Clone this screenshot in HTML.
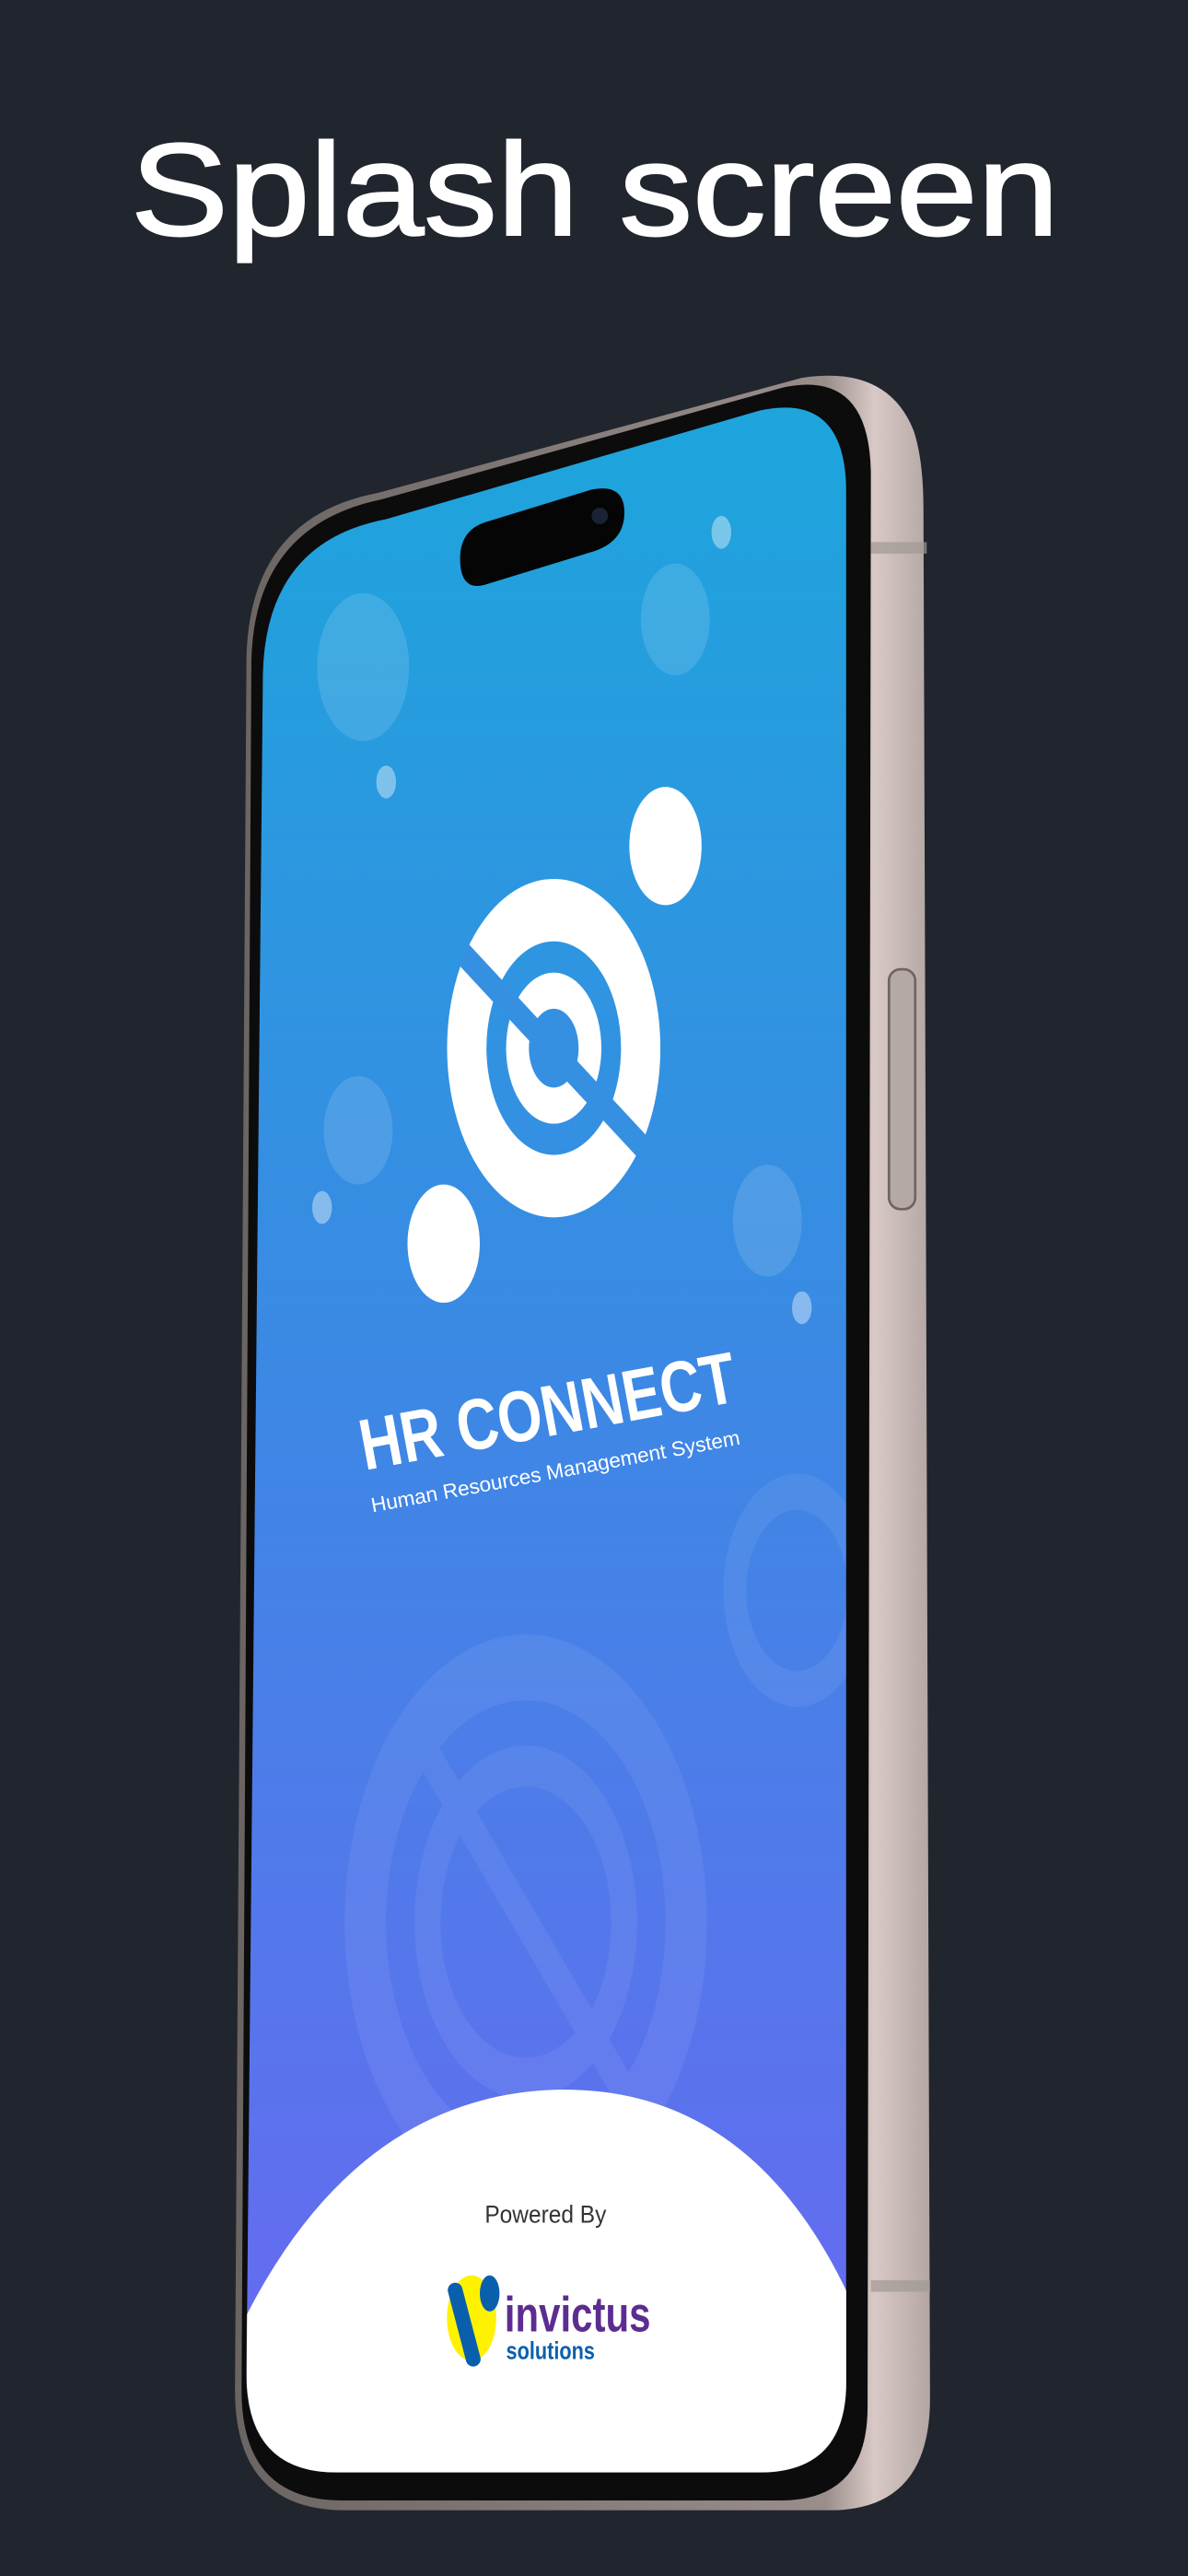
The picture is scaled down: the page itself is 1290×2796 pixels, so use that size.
<!DOCTYPE html>
<html><head><meta charset="utf-8"><style>
html,body{margin:0;padding:0;background:#21252d;}
svg{display:block}
</style></head><body>
<svg width="1290" height="2796" viewBox="0 0 723 1568" preserveAspectRatio="none" xmlns="http://www.w3.org/2000/svg">
<defs>
<linearGradient id="scr" x1="0" y1="0" x2="0" y2="1">
<stop offset="0" stop-color="#1ca6dc"/>
<stop offset="0.45" stop-color="#3a8ae4"/>
<stop offset="1" stop-color="#6c66f2"/>
</linearGradient>
<linearGradient id="frm" x1="0" y1="0" x2="1" y2="0">
<stop offset="0" stop-color="#6a6462"/>
<stop offset="0.85" stop-color="#9a8e8b"/>
<stop offset="0.92" stop-color="#d9c9c6"/>
<stop offset="1" stop-color="#b3a6a3"/>
</linearGradient>
<clipPath id="sc"><path d="M160 410 Q162 330 235 316 L462 250 Q515 238 515 300 L515 1450 Q515 1505 462 1505 L205 1505 Q150 1505 150 1445 Z"/></clipPath>
<clipPath id="lc"><ellipse cx="337" cy="638" rx="66" ry="104"/></clipPath>
<clipPath id="wc"><ellipse cx="320" cy="1170" rx="100" ry="160"/></clipPath>
</defs>
<rect width="723" height="1568" fill="#21252d"/>
<text x="362" y="143" font-family="Liberation Sans, sans-serif" font-size="80" fill="#fff" stroke="#fff" stroke-width="1.2" text-anchor="middle" textLength="565" lengthAdjust="spacingAndGlyphs">Splash screen</text>
<!-- frame -->
<path d="M150 400 Q152 315 230 300 L488 230 Q540 222 556 262 Q562 280 562 310 L566 1460 Q566 1528 505 1528 L210 1528 Q143 1528 143 1455 Z" fill="url(#frm)"/>
<path d="M153 402 Q155 320 232 304 L476 236 Q530 224 530 290 L528 1465 Q528 1522 475 1522 L208 1522 Q147 1522 147 1455 Z" fill="#0c0c0d"/>
<rect x="530" y="330" width="34" height="7" fill="#a09894" opacity="0.7"/>
<rect x="530" y="1388" width="36" height="7" fill="#a09894" opacity="0.7"/>
<rect x="541" y="590" width="16" height="146" rx="7" fill="#b5a9a6" stroke="#6e6462" stroke-width="1.5"/>
<!-- screen -->
<g clip-path="url(#sc)">
<rect x="140" y="230" width="390" height="1290" fill="url(#scr)"/>
<g fill="#fff">
<ellipse cx="221" cy="406" rx="28" ry="45" opacity="0.13"/>
<ellipse cx="411" cy="377" rx="21" ry="34" opacity="0.13"/>
<ellipse cx="235" cy="476" rx="6" ry="10" opacity="0.4"/>
<ellipse cx="439" cy="324" rx="6" ry="10" opacity="0.4"/>
<ellipse cx="218" cy="688" rx="21" ry="33" opacity="0.13"/>
<ellipse cx="196" cy="735" rx="6" ry="10" opacity="0.4"/>
<ellipse cx="467" cy="743" rx="21" ry="34" opacity="0.13"/>
<ellipse cx="488" cy="796" rx="6" ry="10" opacity="0.4"/>
</g>
<!-- watermark -->
<g fill="none" stroke="#fff" opacity="0.07">
<g transform="translate(485,968) scale(0.63,1)"><circle r="60" stroke-width="22"/></g>
<g transform="translate(320,1170) scale(0.63,1)"><circle r="155" stroke-width="40"/><circle r="95" stroke-width="25"/></g>
<line x1="250" y1="1050" x2="390" y2="1290" stroke-width="16" clip-path="url(#wc)"/>
</g>
<!-- logo -->
<g transform="translate(337,638) scale(0.63,1)">
<circle r="84" fill="none" stroke="#fff" stroke-width="38"/>
<circle r="46" fill="#fff"/>
<circle r="24" fill="#3590e2"/>
</g>
<g clip-path="url(#lc)">
<line x1="272" y1="570" x2="402" y2="710" stroke="#3590e2" stroke-width="13"/>
</g>
<ellipse cx="405" cy="515" rx="22" ry="36" fill="#fff"/>
<ellipse cx="270" cy="757" rx="22" ry="36" fill="#fff"/>
<!-- title -->
<g transform="rotate(-10.5 222 895)">
<text x="222" y="895" font-family="Liberation Sans, sans-serif" font-weight="bold" font-size="44" fill="#fff" textLength="232" lengthAdjust="spacingAndGlyphs">HR CONNECT</text>
<text x="222" y="921" font-family="Liberation Sans, sans-serif" font-size="12.5" fill="#fff" textLength="228" lengthAdjust="spacingAndGlyphs">Human Resources Management System</text>
</g>
<!-- white dome -->
<path d="M140 1430 Q210 1275 340 1272 Q460 1270 520 1405 L520 1520 L140 1520 Z" fill="#fff"/>
<text x="332" y="1353" font-family="Liberation Sans, sans-serif" font-size="15" fill="#333" text-anchor="middle" textLength="74" lengthAdjust="spacingAndGlyphs">Powered By</text>
<ellipse cx="287" cy="1411" rx="15" ry="26" fill="#fff200"/>
<line x1="277" y1="1394" x2="288" y2="1436" stroke="#0a5fad" stroke-width="9" stroke-linecap="round"/>
<ellipse cx="298" cy="1396" rx="6" ry="11" fill="#0a5fad"/>
<text x="307" y="1419" font-family="Liberation Sans, sans-serif" font-weight="bold" font-size="30" fill="#5d2c90" textLength="89" lengthAdjust="spacingAndGlyphs">invictus</text>
<text x="308" y="1436" font-family="Liberation Sans, sans-serif" font-weight="bold" font-size="15" fill="#0a5fad" textLength="54" lengthAdjust="spacingAndGlyphs">solutions</text>
</g>
<!-- dynamic island -->
<path d="M295 318 L360 298 Q380 294 380 312 Q380 330 360 336 L295 356 Q280 360 280 340 Q280 323 295 318 Z" fill="#050505"/>
<circle cx="365" cy="314" r="5" fill="#1a2233"/>
</svg>
</body></html>
